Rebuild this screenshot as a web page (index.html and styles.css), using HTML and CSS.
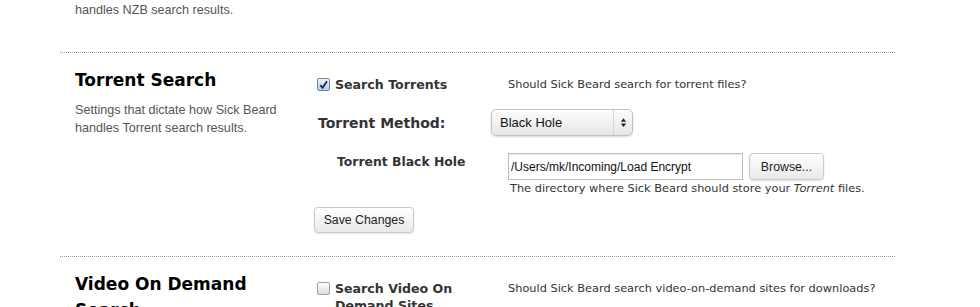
FILE: index.html
```html
<!doctype html>
<html>
  <head>
    <meta charset="UTF-8" />
    <title>Search Settings</title>
    <link rel="stylesheet" href="styles.css">
  </head>
  <body>
    <div id="config">
      <div class="group group-tail">
        <p class="group-desc">handles NZB search results.</p>
      </div>

      <div class="group">
        <div class="group-info">
          <h3>Torrent Search</h3>
          <p class="group-desc">Settings that dictate how Sick Beard handles Torrent search results.</p>
        </div>
        <div class="group-fields">
          <div class="field check-row">
            <label class="check-label">
              <span class="check checked">
                <svg viewBox="0 0 12 12" width="12" height="12"><path d="M2.5 6.2 L5 9 L9.8 1.8" fill="none" stroke="#1d2a4a" stroke-width="2"/></svg>
              </span>
              <span class="check-text">Search Torrents</span>
            </label>
            <span class="help">Should Sick Beard search for torrent files?</span>
          </div>

          <div class="field method-row">
            <span class="method-label">Torrent Method:</span>
            <div class="select">
              <span class="select-value">Black Hole</span>
              <span class="select-arrows">
                <svg viewBox="0 0 8 12" width="7" height="11"><path d="M4 1 L7 5 H1 Z M4 11 L7 7 H1 Z" fill="#222"/></svg>
              </span>
            </div>
          </div>

          <div class="field path-row">
            <span class="path-label">Torrent Black Hole</span>
            <div class="path-input">
              <div class="path-line">
                <input class="text-input" type="text" value="/Users/mk/Incoming/Load Encrypt">
                <button class="btn browse">Browse...</button>
              </div>
              <span class="help">The directory where Sick Beard should store your <i>Torrent</i> files.</span>
            </div>
          </div>

          <button class="btn save">Save Changes</button>
        </div>
      </div>

      <div class="group">
        <div class="group-info">
          <h3>Video On Demand Search</h3>
        </div>
        <div class="group-fields">
          <div class="field check-row">
            <label class="check-label">
              <span class="check"></span>
              <span class="check-text wrap">Search Video On Demand Sites</span>
            </label>
            <span class="help">Should Sick Beard search video-on-demand sites for downloads?</span>
          </div>
        </div>
      </div>
    </div>
  </body>
</html>
```

FILE: styles.css
```css
* {
  padding: 0px;
  margin: 0px;
  box-sizing: border-box;
}
body {
  background: #fff;
  color: #333;
  font-family: "Liberation Sans", Arial, sans-serif;
  height: 307px;
  overflow: hidden;
}
#config {
  width: 835px;
  margin-left: 60px;
}
.group {
  display: flex;
  border-top: 1px dotted #999;
  padding: 14px 0 23px 15px;
}
.group-tail {
  border-top: none;
  padding: 1px 0 33px 15px;
}
.group-info {
  width: 239px;
  flex: none;
}
.group-info h3 {
  font-family: "DejaVu Sans", Verdana, sans-serif;
  font-size: 17px;
  line-height: 26px;
  font-weight: bold;
  color: #000;
  width: 190px;
}
.group-desc {
  font-size: 12.6px;
  line-height: 18px;
  color: #555;
  margin-top: 8px;
  width: 215px;
}
.group-tail .group-desc {
  margin-top: 0;
}
.group-fields {
  flex: 1;
}
.field {
  display: flex;
  align-items: center;
}
.help {
  font-family: "DejaVu Sans", Verdana, sans-serif;
  font-size: 11.35px;
  line-height: 14px;
  color: #333;
}
.check-row {
  min-height: 32px;
  align-items: flex-start;
  padding-top: 9px;
}
.check-row .help {
  padding-top: 1px;
}
.check-label {
  display: flex;
  align-items: flex-start;
  width: 194px;
  padding-left: 3px;
}
.check {
  width: 13px;
  height: 13px;
  border: 1px solid #9aa3b0;
  border-radius: 2px;
  background: linear-gradient(#fff, #dcdcdc);
  flex: none;
  margin-top: 2px;
  display: flex;
  align-items: center;
  justify-content: center;
}
.check.checked {
  border-color: #6f83a6;
  background: linear-gradient(#eef3fb, #b9cbe6);
}
.check-text {
  font-family: "DejaVu Sans", Verdana, sans-serif;
  font-size: 12.6px;
  line-height: 17px;
  font-weight: bold;
  color: #333;
  margin-left: 5px;
}
.check-text.wrap {
  width: 130px;
}
.method-row {
  margin-top: 10px;
}
.method-label {
  font-family: "DejaVu Sans", Verdana, sans-serif;
  font-size: 14px;
  font-weight: bold;
  color: #333;
  width: 177px;
  padding-left: 4px;
}
.select {
  position: relative;
  width: 142px;
  height: 27px;
  border: 1px solid #c2c2c2;
  border-radius: 5px;
  background: linear-gradient(#fdfdfd, #e6e6e6);
  box-shadow: 0 1px 2px rgba(0, 0, 0, 0.15);
  display: flex;
  align-items: center;
}
.select-value {
  font-size: 13px;
  color: #111;
  padding-left: 8px;
}
.select-arrows {
  position: absolute;
  right: 0;
  top: 0;
  bottom: 0;
  width: 19px;
  border-left: 1px solid #d4d4d4;
  display: flex;
  align-items: center;
  justify-content: center;
}
.path-row {
  margin-top: 17px;
  align-items: flex-start;
}
.path-label {
  font-family: "DejaVu Sans", Verdana, sans-serif;
  font-size: 12.4px;
  font-weight: bold;
  color: #333;
  width: 194px;
  padding-left: 23px;
  line-height: 18px;
}
.path-line {
  display: flex;
  gap: 6px;
}
.text-input {
  width: 235px;
  height: 27px;
  border: 1px solid #bdbdbd;
  font-family: "Liberation Sans", Arial, sans-serif;
  font-size: 12px;
  color: #111;
  padding: 0 2px;
  outline: none;
  box-shadow: inset 0 1px 1px rgba(0, 0, 0, 0.08);
}
.path-input .help {
  display: block;
  padding-left: 2px;
  margin-top: 1px;
}
.btn {
  font-family: "Liberation Sans", Arial, sans-serif;
  font-size: 12.3px;
  color: #222;
  height: 27px;
  border: 1px solid #cacaca;
  border-radius: 4px;
  background: linear-gradient(#ffffff, #e9e9e9);
  box-shadow: 0 1px 2px rgba(0, 0, 0, 0.12);
}
.browse {
  width: 75px;
}
.save {
  width: 100px;
  height: 26px;
  margin-top: 12px;
}
```
